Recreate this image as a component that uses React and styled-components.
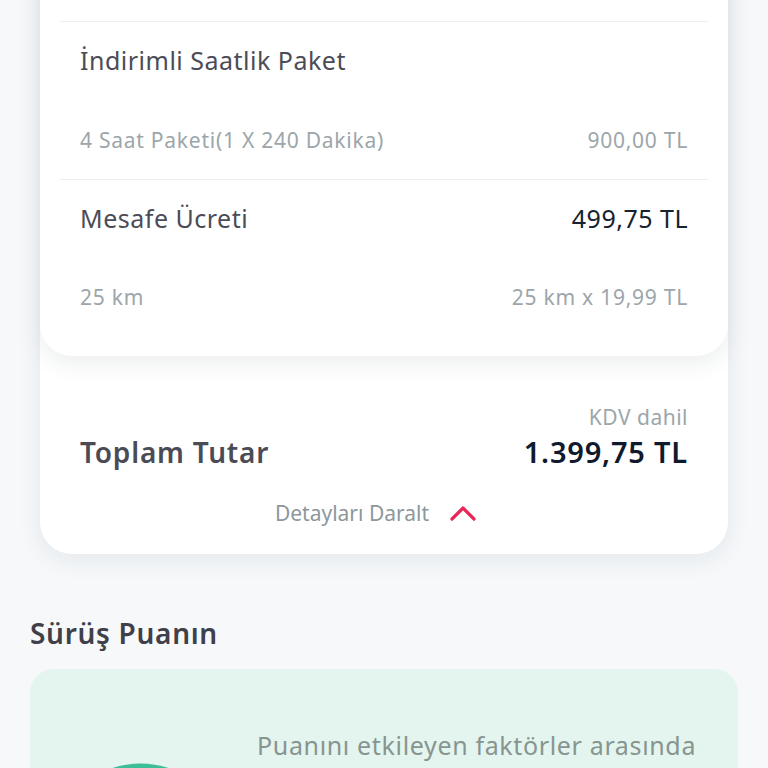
import React from "react";
import styled, { createGlobalStyle } from "styled-components";

const Global = createGlobalStyle`
  html, body { margin: 0; padding: 0; background: #f6f8fa; }
  body { font-family: "Noto Sans", "Open Sans", sans-serif; overflow: hidden; }
`;

const Page = styled.div`
  width: 768px;
  height: 768px;
  overflow: hidden;
  background: #f6f8fa;
  box-sizing: border-box;
  padding: 0 30px;
`;

const Shift = styled.div`
  margin-top: -60px;
`;

const OuterCard = styled.div`
  margin: 0 10px;
  background: #ffffff;
  border-radius: 32px;
  box-shadow: 0 6px 24px rgba(30, 50, 70, 0.08);
`;

const DetailCard = styled.div`
  background: #ffffff;
  border-radius: 32px;
  padding: 0 20px 20px;
  box-shadow: 0 8px 22px rgba(30, 50, 70, 0.08);
`;

const Section = styled.div`
  padding: ${(p) => (p.$top ? "0 20px 26px" : "23px 20px 26px")};
  border-bottom: ${(p) => (p.$last ? "none" : "1.5px solid #eceff1")};
  display: flex;
  flex-direction: column;
  gap: ${(p) => p.$gap || 52}px;
`;

const Row = styled.div`
  display: flex;
  justify-content: space-between;
  align-items: center;
`;

const ItemTitle = styled.span`
  font-size: 25px;
  line-height: 30px;
  color: ${(p) => (p.$dark ? "#15222f" : "#4b4c56")};
  letter-spacing: 0.5px;
`;

const SubText = styled.span`
  font-size: 21px;
  line-height: 26px;
  color: #9ca6aa;
  letter-spacing: 0.75px;
`;

const TotalBlock = styled.div`
  padding: 49px 40px 28px;
`;

const TotalRow = styled.div`
  display: flex;
  justify-content: space-between;
  align-items: flex-end;
`;

const TotalLabel = styled.span`
  font-size: 28px;
  line-height: 34px;
  font-weight: 600;
  color: #4a4b55;
  letter-spacing: 0.8px;
`;

const AmountCol = styled.div`
  display: flex;
  flex-direction: column;
  align-items: flex-end;
  gap: 6px;
`;

const Kdv = styled.span`
  font-size: 21px;
  line-height: 24px;
  color: #9ca6aa;
  letter-spacing: 0.5px;
`;

const TotalAmount = styled.span`
  font-size: 29px;
  line-height: 34px;
  font-weight: 600;
  color: #101a2c;
  letter-spacing: 0.8px;
`;

const Collapse = styled.div`
  margin-top: 31px;
  display: flex;
  justify-content: center;
  align-items: center;
  gap: 20px;
  padding-right: 16px;
`;

const CollapseText = styled.span`
  font-size: 21px;
  line-height: 26px;
  color: #8c979c;
  letter-spacing: 0;
`;

const SectionTitle = styled.h2`
  margin: 62px 0 19px;
  font-size: 28px;
  line-height: 34px;
  font-weight: 600;
  color: #3f4049;
  letter-spacing: 0.7px;
`;

const ScoreCard = styled.div`
  background: #e3f5ee;
  border-radius: 24px;
  padding: 60px 30px 60px 20px;
  display: flex;
  align-items: flex-start;
  gap: 26px;
`;

const Gauge = styled.div`
  flex: 0 0 181px;
  margin-top: 34px;
`;

const ScoreText = styled.p`
  margin: 0;
  font-size: 25px;
  line-height: 32px;
  color: #879490;
  letter-spacing: 0.65px;
`;

export default function App() {
  return (
    <>
      <Global />
      <Page>
        <Shift>
          <OuterCard>
            <DetailCard>
              <Section $top $gap={0} style={{ height: 55 }} />
              <Section>
                <Row>
                  <ItemTitle>İndirimli Saatlik Paket</ItemTitle>
                </Row>
                <Row>
                  <SubText>4 Saat Paketi(1 X 240 Dakika)</SubText>
                  <SubText>900,00 TL</SubText>
                </Row>
              </Section>
              <Section $last $gap={51}>
                <Row>
                  <ItemTitle>Mesafe Ücreti</ItemTitle>
                  <ItemTitle $dark>499,75 TL</ItemTitle>
                </Row>
                <Row>
                  <SubText>25 km</SubText>
                  <SubText>25 km x 19,99 TL</SubText>
                </Row>
              </Section>
            </DetailCard>
            <TotalBlock>
              <TotalRow>
                <TotalLabel>Toplam Tutar</TotalLabel>
                <AmountCol>
                  <Kdv>KDV dahil</Kdv>
                  <TotalAmount>1.399,75 TL</TotalAmount>
                </AmountCol>
              </TotalRow>
              <Collapse>
                <CollapseText>Detayları Daralt</CollapseText>
                <svg width="28" height="18" viewBox="0 0 28 18" fill="none">
                  <path d="M3 15 L14 4 L25 15" stroke="#e8265a" strokeWidth="3.2" strokeLinecap="round" strokeLinejoin="round" />
                </svg>
              </Collapse>
            </TotalBlock>
          </OuterCard>
          <SectionTitle>Sürüş Puanın</SectionTitle>
          <ScoreCard>
            <Gauge>
              <svg width="181" height="181" viewBox="0 0 181 181">
                <circle cx="90.5" cy="90.5" r="82" fill="none" stroke="#3dbd98" strokeWidth="16" />
              </svg>
            </Gauge>
            <ScoreText>
              Puanını etkileyen faktörler arasında ani hızlanma, ani frenleme ve keskin dönüşler bulunur.
            </ScoreText>
          </ScoreCard>
        </Shift>
      </Page>
    </>
  );
}
